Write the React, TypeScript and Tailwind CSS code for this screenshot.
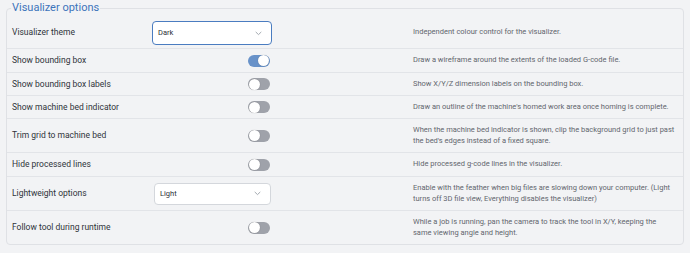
import React from "react";

type Row = {
  label: string;
  kind: "select" | "toggle";
  value?: string;
  on?: boolean;
  focused?: boolean;
  desc: string;
  h: string;
  dw?: string;
};

const rows: Row[] = [
  { label: "Visualizer theme", kind: "select", value: "Dark", focused: true, desc: "Independent colour control for the visualizer.", h: "h-[33px]" },
  { label: "Show bounding box", kind: "toggle", on: true, desc: "Draw a wireframe around the extents of the loaded G-code file.", h: "h-[24px]" },
  { label: "Show bounding box labels", kind: "toggle", desc: "Show X/Y/Z dimension labels on the bounding box.", h: "h-[23px]" },
  { label: "Show machine bed indicator", kind: "toggle", desc: "Draw an outline of the machine's homed work area once homing is complete.", h: "h-[23px]" },
  { label: "Trim grid to machine bed", kind: "toggle", desc: "When the machine bed indicator is shown, clip the background grid to just past the bed's edges instead of a fixed square.", h: "h-[34px]" },
  { label: "Hide processed lines", kind: "toggle", desc: "Hide processed g-code lines in the visualizer.", h: "h-[24px]" },
  { label: "Lightweight options", kind: "select", value: "Light", desc: "Enable with the feather when big files are slowing down your computer. (Light turns off 3D file view, Everything disables the visualizer)", h: "h-[34px]" },
  { label: "Follow tool during runtime", kind: "toggle", desc: "While a job is running, pan the camera to track the tool in X/Y, keeping the same viewing angle and height.", h: "h-[33px]", dw: "w-[258px]" },
];

function Chevron() {
  return (
    <svg width="7" height="5" viewBox="0 0 7 5" fill="none">
      <path d="M1 1.2 L3.5 3.6 L6 1.2" stroke="#9aa0a8" strokeWidth="0.9" strokeLinecap="round" strokeLinejoin="round" />
    </svg>
  );
}

function Select({ value, focused }: { value: string; focused?: boolean }) {
  return (
    <div
      className={
        focused
          ? "mt-[2px] flex h-[24px] w-[120px] items-center justify-between rounded-[4px] border-[1.5px] border-[#4a7cc0] bg-white pl-[5px] pr-[9px]"
          : "ml-[2px] flex h-[22px] w-[117px] items-center justify-between rounded-[4px] border border-[#d4d7dc] bg-white pl-[5px] pr-[9px]"
      }
    >
      <span className="text-[7.5px] text-[#2b2f36]">{value}</span>
      <Chevron />
    </div>
  );
}

function Toggle({ on }: { on?: boolean }) {
  return (
    <div className="flex w-[120px] justify-end pr-[2px]">
      <div
        className={
          on
            ? "flex h-[12px] w-[22px] items-center justify-end rounded-full bg-[#6892c9] px-[1px]"
            : "flex h-[12px] w-[22px] items-center justify-start rounded-full bg-[#9fa2aa] px-[1px]"
        }
      >
        <div className="h-[11px] w-[11px] rounded-full bg-white shadow-[0_0_1px_rgba(0,0,0,0.35)]" />
      </div>
    </div>
  );
}

export default function App() {
  return (
    <div
      className="h-[253px] w-[690px] bg-[#f2f3f5] px-[6px] pr-[6px]"
      style={{ fontFamily: "Roboto, 'Noto Sans', sans-serif" }}
    >
      <fieldset className="w-[678px] rounded-[4px] border border-[#dfe1e5]">
        <legend className="ml-[4px] px-[1px] text-[11px] leading-[16px] text-[#3d74bb]">Visualizer options</legend>
        {rows.map((r, i) => (
          <div
            key={i}
            className={
              "flex items-center pl-[5px] " +
              r.h +
              (i < rows.length - 1 ? " border-b border-[#e2e4e8]" : "")
            }
          >
            <div className="w-[140px] shrink-0 text-[8.5px] text-[#30343b]">{r.label}</div>
            <div className="w-[120px] shrink-0">
              {r.kind === "select" ? <Select value={r.value!} focused={r.focused} /> : <Toggle on={r.on} />}
            </div>
            <div className={"ml-[141px] text-[7.5px] leading-[10.5px] text-[#62666e] " + (r.dw ?? "w-[268px]")}>{r.desc}</div>
          </div>
        ))}
      </fieldset>
    </div>
  );
}
